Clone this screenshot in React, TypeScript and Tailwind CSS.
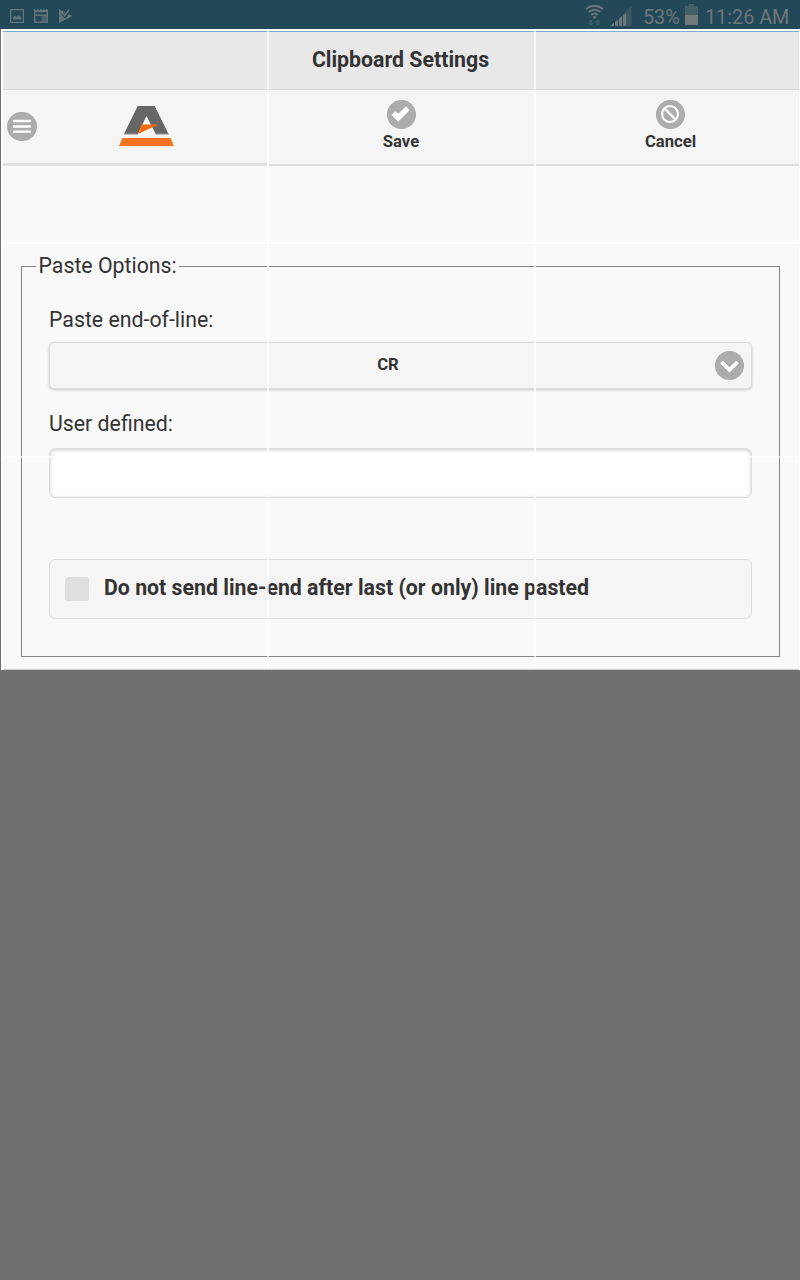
import React from "react";

function StatusBar() {
  return (
    <div className="flex h-[29px] shrink-0 justify-between bg-[#234857] text-[#6e777b]">
      <div className="flex pl-[10px] pt-[9px]">
        <svg width="64" height="16" viewBox="0 0 64 16" fill="currentColor" className="text-[#64747a]">
          <path fillRule="evenodd" d="M0 0h14v14H0zM1.300 1.300v11.400h11.400V1.300z" />
          <path d="M3 10.500V8l2-1 2 1 2-2 2 2v2.500z" />
          <path d="M24.700 2v11.300h12.600V2" fill="none" stroke="currentColor" strokeWidth="1.400" />
          <path d="M24 1h14v2.200H24z" />
          <path d="M24 0h1.500v2h-1.500zM27 0h1.500v2h-1.500zM30 0h1.500v2h-1.500zM33 0h1.500v2h-1.500zM36 0h1.500v2h-1.500z" />
          <path d="M31.500 7h5.500v6h-5.500z" opacity="0.6" />
          <path d="M25 5.500h12v1.500H25z" />
          <path d="M49 0l13 7-13 7z" />
          <path d="M52.500 4.500l2.500 2.700 5-6" fill="none" stroke="#234857" strokeWidth="4" />
          <path d="M52 3.600l2.800 2.700L59 .8" fill="none" stroke="currentColor" strokeWidth="1.800" />
          <path d="M57 7l2-2 3 2-3 2zM50 5l5 4.500 3-2.500 1 1-10 6z" />
        </svg>
      </div>
      <div className="flex pr-[11px]">
        <svg width="50" height="29" viewBox="0 0 50 29" className="mr-[8px]">
          <g fill="none" stroke="#6e777b" strokeWidth="1.900">
            <path d="M1 9q8.500-6.500 17 0M3.700 12q5.800-4.600 11.600 0M6.300 15q3.200-3 6.400 0" />
          </g>
          <path d="M7.500 16.800q2-1.500 4 0l-2 2.200z" fill="#6e777b" />
          <path d="M4.500 20h2.500v3h1.800l-3 3-3-3h1.700zM11.500 25h2.500v-3h1.700l-3-3-3 3h1.800z" fill="#3c5c68" />
          <path d="M38 14L46.500 6v20H38z" fill="#3a5965" />
          <path d="M25 26l4-3.500V26zM30 22l3-2.500V26h-3zM34 18.800l3-2.800v10h-3zM38 15.500l3-2.500v13h-3z" fill="#6e777b" />
        </svg>
        <span className="w-[42px] pt-[6px] text-[19.800px] leading-[24px]">53%</span>
        <svg width="13" height="29" viewBox="0 0 13 29" className="mr-[7px]">
          <path d="M4 4h5v2h4v9H0V6h4z" fill="#455e68" />
          <path d="M0 15h13v10H0z" fill="#73797b" />
        </svg>
        <span className="w-[84px] whitespace-nowrap pt-[6px] text-[19.800px] leading-[24px]">11:26 AM</span>
      </div>
    </div>
  );
}

function Logo() {
  return (
    <svg width="56" height="42" viewBox="0 0 56 42">
      <path d="M18.700 1h17L49.500 29H36.500L27.500 11.500 19 29H5z" fill="#666" />
      <path d="M27.500 11L19 29h17.500z" fill="#f5f5f5" />
      <path d="M23 19.500H39.500L19 29z" fill="#ff6a0d" />
      <path d="M5 28.700h14v1.300H4.500zM36.500 28.700h13l.5 1.300H37z" fill="#b9bec1" />
      <path d="M3.500 33h48L55 41H0z" fill="#f47321" />
    </svg>
  );
}

function Disc({ children }: { children: React.ReactNode }) {
  return (
    <svg width="30" height="30" viewBox="0 0 30 30" className="shrink-0">
      <circle cx="15.500" cy="14.500" r="14.600" fill="#acacac" />
      {children}
    </svg>
  );
}

function Toolbar() {
  return (
    <div className="flex h-[76px] bg-[#f5f5f5]">
      <div className="flex h-[76px] w-[265px] border-b-[3px] border-[#e1e1e1] pl-[4px]">
        <div className="pt-[22px]">
          <svg width="30" height="30" viewBox="0 0 30 30">
            <rect y="0" width="30" height="29" rx="14.500" fill="#acacac" />
            <path d="M7 9h16M7 14.500h16M7 19.600h16" stroke="#fff" strokeWidth="2.400" strokeLinecap="round" />
          </svg>
        </div>
        <div className="ml-[82px] pt-[15px]"><Logo /></div>
      </div>
      <div className="flex w-[266px] flex-col items-center border-b-2 border-[#dedede] pt-[10px]">
        <Disc><path d="M5.500 15l3.800-3.800 3 2.600 7.700-7.600 3.600 4.100L12.300 21.700z" fill="#fff" /></Disc>
        <span className="text-[16.667px] font-bold leading-[24px]">Save</span>
      </div>
      <div className="flex flex-1 flex-col items-center border-b-2 border-[#dedede] pl-[6px] pt-[10px]">
        <Disc>
          <circle cx="15" cy="14" r="8" fill="none" stroke="#fff" strokeWidth="2.200" />
          <path d="M9.300 8.300l11.400 11.400" stroke="#fff" strokeWidth="2.400" />
        </Disc>
        <span className="pl-[2px] text-[16.667px] font-bold leading-[24px]">Cancel</span>
      </div>
    </div>
  );
}

function PasteOptions() {
  return (
    <fieldset className="ml-[18px] mr-[19px] mt-[86px] h-[405px] border border-[#858585] px-[27px]">
      <legend className="-ml-[13px] h-[29px] px-[2.500px] text-[21.300px] leading-[27px]">Paste Options:</legend>
      <div className="mt-[25px] text-[21.300px] leading-[28px]">Paste end-of-line:</div>
      <div className="mt-[8px] flex h-[47px] items-center rounded-[5px] border border-[#ddd] bg-[#f5f5f5] pr-[7px] shadow-[0_1px_3px_rgba(0,0,0,0.2)]">
        <span className="flex-1 pb-[2px] pl-[12px] text-center text-[16.667px] font-bold">CR</span>
        <Disc><path d="M7.500 11l8 7.800 8-7.800" stroke="#fff" strokeWidth="3.800" fill="none" /></Disc>
      </div>
      <label htmlFor="defined" className="mt-[21px] block text-[21.300px] leading-[28px]">User defined:</label>
      <input id="defined" className="mt-[10px] block h-[50px] w-full rounded-[6px] border border-[#ddd] bg-white shadow-[inset_0_1px_4px_rgba(0,0,0,0.2)] outline-none" />
      <div className="mt-[61px] flex h-[60px] items-center rounded-[6px] border border-[#ddd] bg-[#f5f5f5] pl-[15px]">
        <div className="h-6 w-6 rounded-[3px] bg-[#dfdfdf]" />
        <span className="ml-[15px] whitespace-nowrap pb-[2px] text-[21.300px] font-bold leading-[28px]">Do not send line-end after last (or only) line pasted</span>
      </div>
    </fieldset>
  );
}

export default function App() {
  return (
    <div className="flex h-[1280px] w-[800px] flex-col overflow-hidden bg-[#707070] font-['Roboto',sans-serif] text-[#333]">
      <StatusBar />
      <main className="relative ml-px flex h-[641px] flex-col border-l-2 border-r border-t-2 border-white bg-[#f9f9f9]">
        <header className="h-[59px] border-b border-t border-b-[#dadada] border-t-[#80adc8] bg-[#e8e8e8] pr-px pt-[14px] text-center text-[21.300px] font-bold leading-[28px]">
          <h1>Clipboard Settings</h1>
        </header>
        <Toolbar />
        <PasteOptions />
        <div className="absolute -top-[2px] bottom-0 left-[264px] w-[2px] bg-white/65" />
        <div className="absolute -top-[2px] bottom-0 left-[531px] w-[2px] bg-white/65" />
        <div className="absolute inset-x-0 top-[211px] h-[2px] bg-white/65" />
        <div className="absolute inset-x-0 top-[425px] h-[2px] bg-white/65" />
        <div className="absolute inset-x-0 bottom-0 h-px bg-[#d0d0d0]" />
      </main>
    </div>
  );
}
